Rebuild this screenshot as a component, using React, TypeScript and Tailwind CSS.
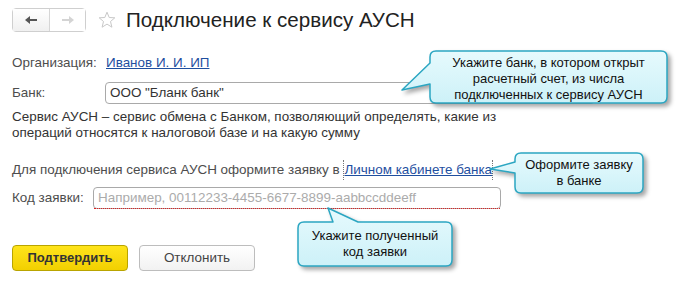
import React from "react";

interface BubbleProps {
  className: string;
  w: number;
  h: number;
  d: string;
  id: string;
  children: React.ReactNode;
}

const Bubble = ({ className, w, h, d, id, children }: BubbleProps) => (
  <div className={`absolute ${className}`}>
    <svg
      className="absolute left-0 top-0 overflow-visible drop-shadow-[3px_3px_2px_rgba(0,0,0,0.35)]"
      width={w}
      height={h}
    >
      <defs>
        <linearGradient id={id} x1="0" y1="0" x2="0" y2="1">
          <stop offset="0" stopColor="#e6fafd" />
          <stop offset="1" stopColor="#cdf1f8" />
        </linearGradient>
      </defs>
      <path d={d} fill={`url(#${id})`} stroke="#2ba6c2" strokeWidth="1.5" strokeLinejoin="round" />
    </svg>
    <div className="relative flex h-full flex-col items-center justify-center text-center text-[13px] leading-4 text-[#111]">
      {children}
    </div>
  </div>
);

const ArrowLeft = () => (
  <svg width="14" height="10" viewBox="0 0 14 10">
    <path d="M1 5 L6 1 V4 H13 V6 H6 V9 Z" fill="currentColor" />
  </svg>
);

const ArrowRight = () => (
  <svg width="14" height="10" viewBox="0 0 14 10">
    <path d="M13 5 L8 1 V4 H1 V6 H8 V9 Z" fill="currentColor" />
  </svg>
);

const Star = () => (
  <svg width="18" height="18" viewBox="0 0 18 18">
    <path
      d="M9 1.2 L11.2 6.5 L16.8 6.8 L12.5 10.5 L13.9 16.2 L9 13.1 L4.1 16.2 L5.5 10.5 L1.2 6.8 L6.8 6.5 Z"
      fill="none"
      stroke="#c8c8c8"
      strokeWidth="1"
      strokeLinejoin="round"
    />
  </svg>
);

const App = () => {
  return (
    <div className="relative h-[290px] w-[700px] overflow-hidden bg-white font-['Liberation_Sans',Arial,sans-serif] text-[13.45px] text-[#333]">
      <div className="flex flex-col px-3 pt-2">
        <div className="flex h-6 items-center">
          <div className="flex h-6 rounded-sm border border-[#cfcfcf]">
            <button className="flex w-[37px] items-center justify-center border-r border-[#d6d6d6] bg-gradient-to-b from-white to-[#f0f0f0] text-[#555]">
              <ArrowLeft />
            </button>
            <button className="flex w-[35px] items-center justify-center bg-white text-[#d4d4d4]">
              <ArrowRight />
            </button>
          </div>
          <div className="ml-3 flex items-center">
            <Star />
          </div>
          <h1 className="ml-[10px] text-[20.6px] leading-6 text-[#222]">Подключение к сервису АУСН</h1>
        </div>

        <div className="mt-[21px] flex h-5 items-center">
          <span className="w-[94px] text-[#4d4d4d]">Организация:</span>
          <a className="text-[#1f4f9f] underline">Иванов И. И. ИП</a>
        </div>

        <div className="mt-[9px] flex h-[22px] items-center">
          <span className="w-[93px] text-[#4d4d4d]">Банк:</span>
          <div className="flex h-[22px] w-[490px] items-center rounded-sm border border-[#a9a9a9] px-1 text-[#333]">
            ООО "Бланк банк"
          </div>
        </div>

        <p className="mt-[5px] leading-4 text-[#333]">
          Сервис АУСН – сервис обмена с Банком, позволяющий определять, какие из
          <br />
          операций относятся к налоговой базе и на какую сумму
        </p>

        <div className="mt-[21px] flex h-4 items-center text-[#4d4d4d]">
          <span>Для подключения сервиса АУСН оформите заявку в&nbsp;</span>
          <a className="border-x border-dotted border-[#777] text-[#1f4f9f] underline">Личном кабинете банка</a>
        </div>

        <div className="mt-[9px] flex h-[22px] items-center">
          <span className="w-[81px] text-[#4d4d4d]">Код заявки:</span>
          <div className="flex h-[22px] w-[408px] flex-col rounded-sm border border-[#a9a9a9]">
            <div className="flex flex-1 items-center border-b border-dotted border-[#e02020] px-1 text-[#ababab]">
              Например, 00112233-4455-6677-8899-aabbccddeeff
            </div>
          </div>
        </div>

        <div className="mt-9 flex gap-[11px]">
          <button className="h-[26px] w-[116px] rounded-sm border border-[#b9a400] bg-gradient-to-b from-[#ffe41a] to-[#f2d000] text-[13px] font-bold text-[#333]">
            Подтвердить
          </button>
          <button className="h-[26px] w-[116px] rounded-sm border border-[#bdbdbd] bg-gradient-to-b from-white to-[#f2f2f2] text-[#444]">
            Отклонить
          </button>
        </div>
      </div>

      <Bubble
        id="b1"
        className="left-[430px] top-[51px] h-[52px] w-[237px] pt-[3px]"
        w={237}
        h={52}
        d="M6 0 H231 Q237 0 237 6 V46 Q237 52 231 52 H6 Q0 52 0 46 V33 L-28 39 L0 12 V6 Q0 0 6 0 Z"
      >
        <span>Укажите банк, в котором открыт</span>
        <span>расчетный счет, из числа</span>
        <span>подключенных к сервису АУСН</span>
      </Bubble>

      <Bubble
        id="b2"
        className="left-[515px] top-[153px] h-[40px] w-[128px]"
        w={128}
        h={40}
        d="M6 0 H122 Q128 0 128 6 V34 Q128 40 122 40 H6 Q0 40 0 34 V20 L-25 16 L0 9 V6 Q0 0 6 0 Z"
      >
        <span>Оформите заявку</span>
        <span>в банке</span>
      </Bubble>

      <Bubble
        id="b3"
        className="left-[298px] top-[222px] h-[44px] w-[154px]"
        w={154}
        h={44}
        d="M6 0 H35 L30 -14 L60 0 H148 Q154 0 154 6 V38 Q154 44 148 44 H6 Q0 44 0 38 V6 Q0 0 6 0 Z"
      >
        <span>Укажите полученный</span>
        <span>код заявки</span>
      </Bubble>
    </div>
  );
};

export default App;
